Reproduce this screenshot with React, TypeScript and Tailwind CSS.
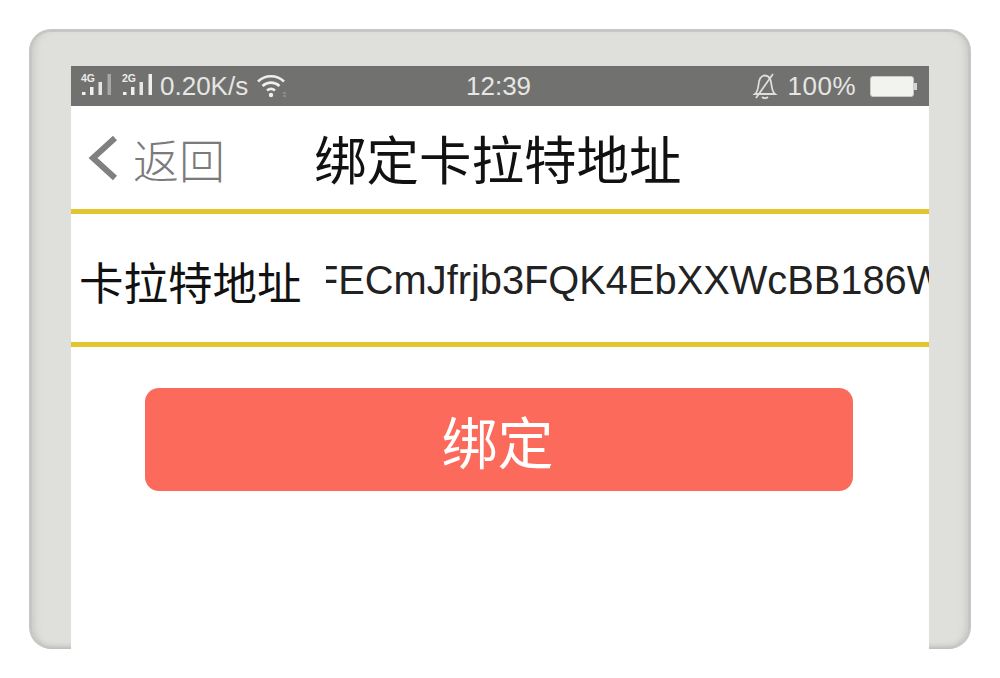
const cjk = '[font-family:"Noto_Sans_CJK_SC","Liberation_Sans",sans-serif]';

// 状态栏信号图标
function Signal({ label, dim, width }: { label: string; dim?: boolean; width: number }) {
    return (
        <svg width={width} height="28" viewBox={`0 0 ${width} 28`} className="shrink-0">
            <text x="1" y="10" fontSize="10.500" fontWeight="700" fill="#ececea" fontFamily="Liberation Sans">{label}</text>
            <rect x="2" y="20" width="3.500" height="3" fill="#f0f0ee" />
            <rect x="10" y="15" width="3.500" height="8" fill="#f0f0ee" />
            <rect x="18.500" y="10" width="3.500" height="13" fill="#e6e6e4" />
            <rect x="27.500" y="2" width="3.500" height="21" fill={dim ? '#a8a8a6' : '#f0f0ee'} />
        </svg>
    );
}

function Wifi() {
    return (
        <svg width="30" height="26" viewBox="0 0 30 26" fill="none" stroke="#ecefec" strokeWidth="2.600" className="shrink-0">
            <path d="M1 8.500C8 1.500 20 1.500 27 8.500" />
            <path d="M5.500 13C10.500 8.500 17.500 8.500 22.500 13" />
            <path d="M10 17.500C12.500 15.500 15.500 15.500 18 17.500" />
            <circle cx="14" cy="22" r="2.200" fill="#ecefec" stroke="none" />
            <path d="M26 20h3M26 23h3" strokeWidth="1" stroke="#a8a8a6" />
        </svg>
    );
}

function MutedBell() {
    return (
        <svg width="26" height="28" viewBox="0 0 26 28" fill="none" stroke="#dededc" strokeWidth="1.800" className="shrink-0">
            <path d="M3 22c2.500-2 3-5 3.500-9C7 7 9.500 3.500 13 3.500S19 7 19.500 13c.5 4 1 7 3.500 9z" />
            <path d="M10 25c1.500 1.500 4.500 1.500 6 0" />
            <path d="M21 2L4 26" />
        </svg>
    );
}

function Battery() {
    return (
        <div className="flex items-center shrink-0">
            <div className="w-[44px] h-[21px] rounded-[3px] border border-[#c9c9c7] bg-[#f2f2ef]" />
            <div className="w-[3px] h-[7px] bg-[#d6d6d4]" />
        </div>
    );
}

function StatusBar() {
    return (
        <div className="h-[40px] bg-[#717170] text-[#e6e6e3] flex items-center pl-[9px] pr-[12px] [font-family:'Liberation_Sans',sans-serif]">
            <div className="w-[386px] flex items-center">
                <Signal label="4G" dim width={41} />
                <Signal label="2G" width={38} />
                <span className="text-[26px] leading-none ml-[1px]">0.20K/s</span>
                <span className="ml-[9px] flex"><Wifi /></span>
            </div>
            <span className="text-[26px] leading-none">12:39</span>
            <div className="ml-auto flex items-center gap-[10px]">
                <MutedBell />
                <span className="text-[26px] leading-none tracking-[0.5px] mr-[4px]">100%</span>
                <Battery />
            </div>
        </div>
    );
}

function NavBar() {
    return (
        <div className="h-[103px] flex items-center bg-white pl-[17px]">
            <svg width="30" height="46" viewBox="0 0 30 46" fill="none" stroke="#808080" strokeWidth="6" className="shrink-0">
                <path d="M27 3L5 23L27 43" />
            </svg>
            <span className={`ml-[15px] text-[46px] leading-none text-[#7b7b7b] font-light ${cjk}`}>返回</span>
            <h1 className={`ml-[89px] text-[52.500px] leading-none font-normal text-[#111] ${cjk}`}>绑定卡拉特地址</h1>
        </div>
    );
}

function AddressRow() {
    return (
        <div className="h-[138px] border-y-[5px] border-[#e3c62f] bg-white flex items-center pl-[8px] pt-[6px]">
            <span className={`text-[44.500px] leading-none text-[#111] shrink-0 w-[247px] ${cjk}`}>卡拉特地址</span>
            <div className="flex-1 overflow-hidden">
                <div className="-ml-[12px] text-[39.800px] leading-none text-[#222] whitespace-nowrap [font-family:'Liberation_Sans',sans-serif]">
                    FECmJfrjb3FQK4EbXXWcBB186Wk
                </div>
            </div>
        </div>
    );
}

export default function App() {
    return (
        <div className="w-[1000px] h-[678px] bg-white pt-[29px] px-[29px]">
            <div className="h-[620px] rounded-[22px] border-t-[3px] border-x-[3px] border-[#c6c7c4] bg-[#dfe0dc] pt-[34px] px-[39px] overflow-hidden shadow-[inset_8px_0_8px_-7px_#c4c4c0,inset_-8px_0_8px_-7px_#c4c4c0,inset_0_-6px_6px_-5px_#a9a9a6]">
                <div className="h-full bg-white flex flex-col">
                    <StatusBar />
                    <NavBar />
                    <AddressRow />
                    <div className="pl-[74px] pr-[76px] pt-[41px]">
                        <button className={`w-full h-[103px] rounded-[14px] bg-[#fb6a5b] text-white text-[56px] leading-none pr-[3px] ${cjk}`}>
                            绑定
                        </button>
                    </div>
                </div>
            </div>
        </div>
    );
}
